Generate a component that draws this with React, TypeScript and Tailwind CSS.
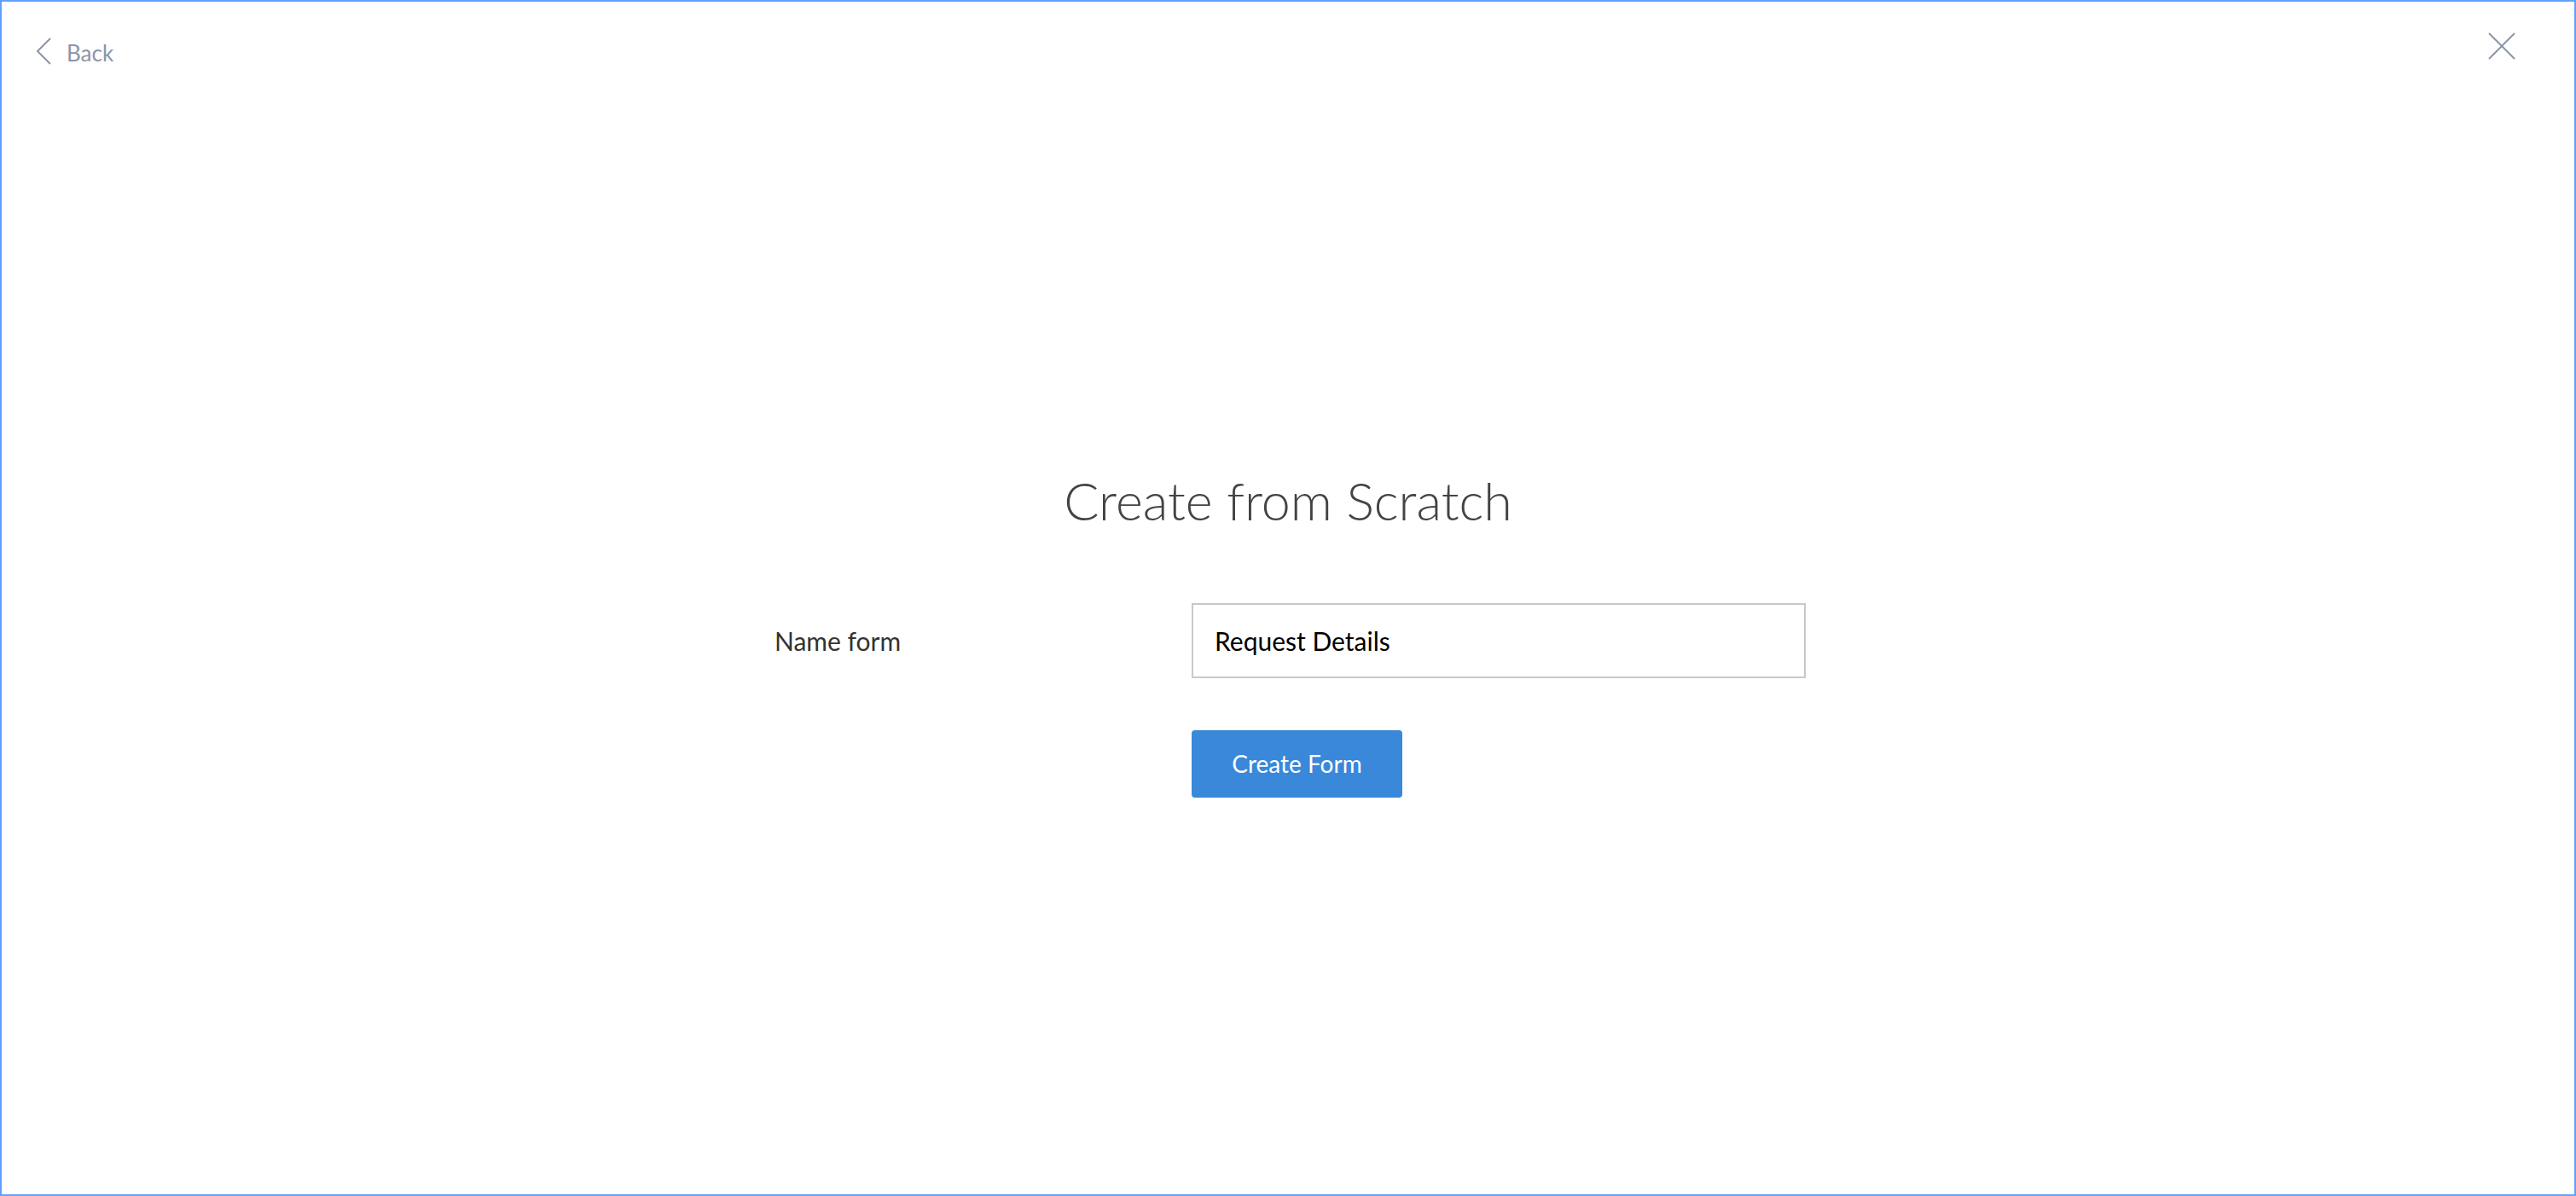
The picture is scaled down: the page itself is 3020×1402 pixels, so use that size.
import React from "react";

export default function App() {
  return (
    <div
      className="w-[3020px] h-[1402px] bg-white border-2 border-[#62a0fb] flex flex-col"
      style={{ fontFamily: "Lato, 'Open Sans', sans-serif" }}
    >
      <header className="h-[100px] flex justify-between items-start">
        <button className="flex items-start ml-[40px] mt-[42px] text-[26px] leading-[31px] text-[#8a95a9]">
          <svg width="20" height="32" viewBox="0 0 20 32">
            <polyline points="17,1 2,16 17,31" fill="none" stroke="#8a95a9" strokeWidth="2" />
          </svg>
          <span className="ml-[16px] mt-[3px]">Back</span>
        </button>
        <button className="mr-[69px] mt-[36px]">
          <svg width="32" height="32" viewBox="0 0 32 32">
            <line x1="1" y1="1" x2="31" y2="31" stroke="#8a94a6" strokeWidth="2" />
            <line x1="31" y1="1" x2="1" y2="31" stroke="#8a94a6" strokeWidth="2" />
          </svg>
        </button>
      </header>
      <main className="flex flex-col items-center">
        <h1 className="mt-[448px] text-[61px] leading-[1.2] font-light text-[#444444]">
          Create from Scratch
        </h1>
        <div className="mt-[84px] w-[1220px] flex items-center">
          <label className="w-[497px] pl-[8px] text-[30px] leading-[1.2] text-[#333333]">Name form</label>
          <div className="w-[720px] h-[88px] border-2 border-[#c8c8cc] flex items-center px-[25px] text-[30px] leading-[1.2] text-[#000000]">
            Request Details
          </div>
          <div className="w-[3px]" />
        </div>
        <div className="w-[1220px] flex mt-[61px]">
          <div className="w-[497px]" />
          <button className="w-[247px] h-[79px] rounded-[4px] bg-[#3a88d9] text-white text-[28px] leading-[1.2]">
            Create Form
          </button>
        </div>
      </main>
    </div>
  );
}
